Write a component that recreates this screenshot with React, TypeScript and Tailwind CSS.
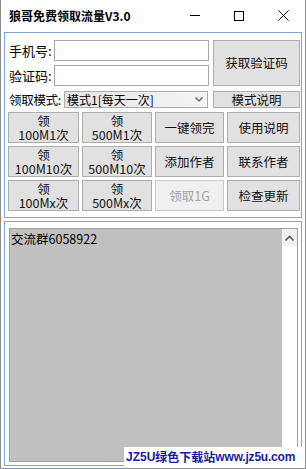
import React from 'react';

const font = { fontFamily: '"Noto Sans CJK SC", "Liberation Sans", sans-serif' };

function Btn({ children, className = '', disabled = false }: { children: React.ReactNode; className?: string; disabled?: boolean }) {
  return (
    <div
      className={`flex flex-col items-center justify-center border leading-[14px] text-[12.5px] ${
        disabled ? 'border-[#c9c9c9] bg-[#f0f0f0] text-[#a3a3a3]' : 'border-[#adadad] bg-[#e1e1e1] text-[#111]'
      } ${className}`}
    >
      {children}
    </div>
  );
}

export default function App() {
  const grid = [
    ['领', '100M1次'],
    ['领', '500M1次'],
    ['一键领完'],
    ['使用说明'],
    ['领', '100M10次'],
    ['领', '500M10次'],
    ['添加作者'],
    ['联系作者'],
    ['领', '100Mx次'],
    ['领', '500Mx次'],
    ['领取1G'],
    ['检查更新'],
  ];

  return (
    <div className="relative w-[306px] h-[469px] bg-white border-x border-b border-[#8c8c8c] flex flex-col overflow-hidden" style={font}>
      {/* title bar */}
      <div className="h-[31px] flex items-center shrink-0">
        <div className="pl-[8px] text-[12px] font-bold text-black flex-1">狼哥免费领取流量V3.0</div>
        <div className="flex h-full">
          <div className="w-[44px] flex items-center justify-center">
            <div className="w-[10px] h-[1px] bg-black" />
          </div>
          <div className="w-[44px] flex items-center justify-center">
            <div className="w-[10px] h-[10px] border border-black" />
          </div>
          <div className="w-[44px] flex items-center justify-center">
            <svg width="11" height="11" viewBox="0 0 11 11">
              <path d="M0.5 0.5L10.5 10.5M10.5 0.5L0.5 10.5" stroke="#000" strokeWidth="1" />
            </svg>
          </div>
        </div>
      </div>

      {/* group 1 */}
      <div className="mx-[3px] mt-[1px] h-[186px] border border-[#7ea6d4] shrink-0">
        <div className="flex pt-[7px]">
          <div className="w-[204px] flex flex-col gap-[4px]">
            <div className="flex items-center h-[21px]">
              <div className="w-[49px] pl-[4px] text-[13px] whitespace-nowrap text-black">手机号:</div>
              <div className="w-[155px] h-[21px] border border-[#a8a8a8] bg-white" />
            </div>
            <div className="flex items-center h-[21px]">
              <div className="w-[49px] pl-[4px] text-[13px] whitespace-nowrap text-black">验证码:</div>
              <div className="w-[155px] h-[21px] border border-[#a8a8a8] bg-white" />
            </div>
          </div>
          <Btn className="ml-[4px] w-[87px] h-[46px]">获取验证码</Btn>
        </div>
        <div className="flex mt-[5px] h-[17px]">
          <div className="w-[59px] pl-[4px] text-[12.5px] leading-[17px] whitespace-nowrap tracking-[-0.3px] text-black">领取模式:</div>
          <div className="w-[144px] h-[17px] border border-[#acacac] bg-gradient-to-r from-[#e6e6e6] to-[#f4f4f4] flex items-center justify-between pl-[2px] pr-[4px]">
            <span className="text-[12px] leading-[15px] text-black whitespace-nowrap">模式1[每天一次]</span>
            <svg width="8" height="5" viewBox="0 0 8 5">
              <path d="M0.5 0.5L4 4L7.5 0.5" stroke="#555" strokeWidth="1.2" fill="none" />
            </svg>
          </div>
          <Btn className="ml-[5px] w-[87px] h-[17px]">模式说明</Btn>
        </div>
        <div className="grid grid-cols-[71px_70px_69px_73px] gap-x-[3px] gap-y-[3px] mt-[4px] pl-[3px]">
          {grid.map((b, i) => (
            <Btn key={i} className="h-[31px]" disabled={b[0] === '领取1G'}>
              {b.map((t, j) => (
                <span key={j}>{t}</span>
              ))}
            </Btn>
          ))}
        </div>
      </div>

      {/* group 2 */}
      <div className="mx-[3px] mt-[3px] h-[245px] border border-[#7ea6d4] shrink-0 pl-[4px] pt-[6px]">
        <div className="w-[289px] h-[234px] border border-[#a0a0a0] bg-[#c0c0c0] flex">
          <div className="flex-1 pl-[1px] pt-[2px] text-[12.5px] leading-[15px] text-black">交流群6058922</div>
          <div className="w-[15px] bg-white flex flex-col">
            <div className="h-[17px] bg-[#f0f0f0] flex items-center justify-center">
              <svg width="9" height="6" viewBox="0 0 9 6">
                <path d="M0.5 5.5L4.5 1.5L8.5 5.5" stroke="#606060" strokeWidth="1.6" fill="none" />
              </svg>
            </div>
          </div>
        </div>
      </div>

      {/* watermark */}
      <div className="absolute left-[123px] top-[447px] w-[181px] h-[20px] bg-white flex items-center pl-[2px] text-[#1b1b9e] font-bold text-[12px] leading-[18px] whitespace-nowrap">
        <span style={{ fontFamily: '"Liberation Sans", sans-serif' }}>JZ5U</span>
        <span>绿色下载站</span>
        <span style={{ fontFamily: '"Liberation Sans", sans-serif' }} className="tracking-[-0.2px]">www.jz5u.com</span>
      </div>
    </div>
  );
}
